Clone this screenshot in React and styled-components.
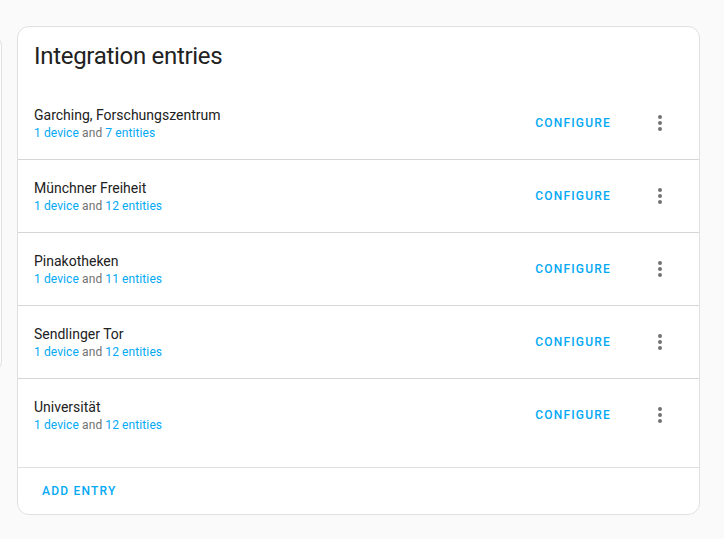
import React from "react";
import styled, { createGlobalStyle } from "styled-components";

const Global = createGlobalStyle`
  html, body { margin: 0; padding: 0; background: #fafafa; }
  body { font-family: Roboto, "Noto Sans", "Liberation Sans", sans-serif; overflow: hidden; }
`;

const Page = styled.div`
  display: flex;
  align-items: flex-start;
  gap: 15px;
  padding-top: 26px;
  width: 724px;
  height: 539px;
  box-sizing: border-box;
`;

const PrevCard = styled.div`
  flex: none;
  width: 302px;
  height: 339px;
  margin-left: -300px;
  margin-top: 8px;
  background: #fff;
  border: 1px solid #e0e0e0;
  border-radius: 12px;
  box-sizing: border-box;
`;

const Card = styled.div`
  flex: none;
  width: 683px;
  height: 489px;
  background: #fff;
  border: 1px solid #e0e0e0;
  border-radius: 12px;
  box-sizing: border-box;
  display: flex;
  flex-direction: column;
`;

const Header = styled.h1`
  margin: 0;
  padding: 13px 16px 15px;
  font-size: 24px;
  line-height: 32px;
  font-weight: 400;
  color: #212121;
  letter-spacing: -0.3px;
`;

const List = styled.div`
  display: flex;
  flex-direction: column;
  padding-bottom: 16px;
`;

const Row = styled.div`
  display: flex;
  align-items: center;
  height: 72px;
  padding: 0 16px;
  border-bottom: ${(p) => (p.$last ? "none" : "1px solid #d6d6d6")};
`;

const Info = styled.div`
  flex: 1;
  display: flex;
  flex-direction: column;
`;

const Primary = styled.div`
  font-size: 14px;
  line-height: 20px;
  color: #212121;
  margin-top: -1px;
`;

const Secondary = styled.div`
  font-size: 12px;
  line-height: 16px;
  color: #727272;
  letter-spacing: 0.1px;
`;

const Link = styled.span`
  color: #03a9f4;
`;

const TextButton = styled.button`
  background: none;
  border: none;
  padding: 0 8px;
  height: 36px;
  font-family: inherit;
  font-size: 12px;
  font-weight: 500;
  letter-spacing: 1.2px;
  text-transform: uppercase;
  color: #03a9f4;
  cursor: pointer;
`;

const IconButton = styled.button`
  background: none;
  border: none;
  width: 48px;
  height: 48px;
  margin-left: 17px;
  margin-right: -1px;
  padding: 12px;
  display: flex;
  align-items: center;
  justify-content: center;
  color: #727272;
`;

const Footer = styled.div`
  border-top: 1px solid #e0e0e0;
  padding: 5px 16px;
  display: flex;
`;

const entries = [
  ["Garching, Forschungszentrum", 7],
  ["Münchner Freiheit", 12],
  ["Pinakotheken", 11],
  ["Sendlinger Tor", 12],
  ["Universität", 12],
];

const Dots = () => (
  <svg width="24" height="24" viewBox="0 0 24 24">
    <path
      fill="currentColor"
      d="M12,16A2,2 0 0,1 14,18A2,2 0 0,1 12,20A2,2 0 0,1 10,18A2,2 0 0,1 12,16M12,10A2,2 0 0,1 14,12A2,2 0 0,1 12,14A2,2 0 0,1 10,12A2,2 0 0,1 12,10M12,4A2,2 0 0,1 14,6A2,2 0 0,1 12,8A2,2 0 0,1 10,6A2,2 0 0,1 12,4Z"
    />
  </svg>
);

export default function App() {
  return (
    <>
      <Global />
      <Page>
        <PrevCard />
        <Card>
          <Header>Integration entries</Header>
          <List>
            {entries.map(([name, n], i) => (
              <Row key={name} $last={i === entries.length - 1}>
                <Info>
                  <Primary>{name}</Primary>
                  <Secondary>
                    <Link>1 device</Link> and <Link>{n} entities</Link>
                  </Secondary>
                </Info>
                <TextButton>Configure</TextButton>
                <IconButton aria-label="menu">
                  <Dots />
                </IconButton>
              </Row>
            ))}
          </List>
          <Footer>
            <TextButton>Add entry</TextButton>
          </Footer>
        </Card>
      </Page>
    </>
  );
}
